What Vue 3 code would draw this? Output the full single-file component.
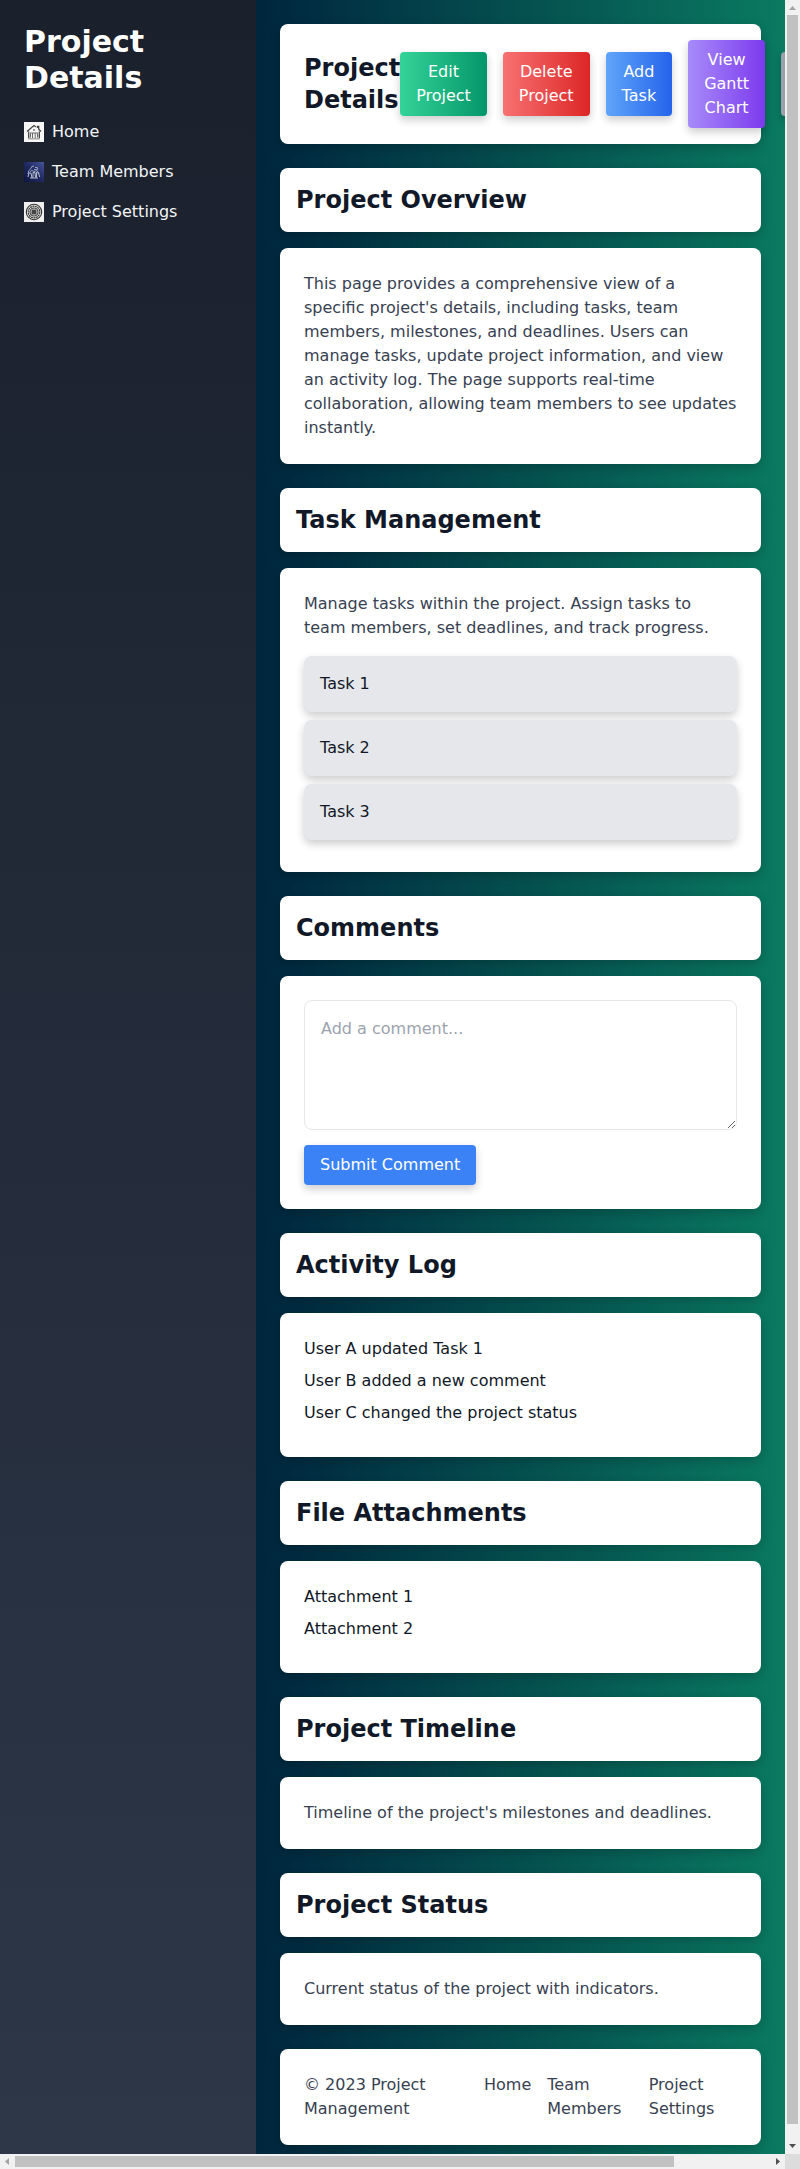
<script setup>
const actions = [
  { label: 'Edit Project', tone: 'green' },
  { label: 'Delete Project', tone: 'red' },
  { label: 'Add Task', tone: 'blue' },
  { label: 'View Gantt Chart', tone: 'purple' },
]
const tasks = ['Task 1', 'Task 2', 'Task 3']
const log = ['User A updated Task 1', 'User B added a new comment', 'User C changed the project status']
const files = ['Attachment 1', 'Attachment 2']
</script>

<template>
  <div class="window">
    <div class="page">
      <aside class="sidebar">
        <h1>Project Details</h1>
        <nav>
          <a>
            <svg class="icon" viewBox="0 0 20 20">
              <rect width="20" height="20" fill="#f7f7f7" />
              <path d="M3 9.500 10 3.500l1.800 1.500M13.500 6V4.300h1.200v2.900L17 9.500M4.700 9.500V16M15.300 9.500V16" fill="none" stroke="#444" stroke-width="1.300" />
              <path d="M4 16.800h12" stroke="#888" stroke-width="1" />
              <path d="M6.500 11.500v4M8.500 11v5M11.200 11v5M13.500 11.500v4M6 11h8" fill="none" stroke="#666" stroke-width="1" />
              <rect x="9" y="7" width="2" height="2" fill="#999" />
            </svg>
            Home
          </a>
          <a>
            <svg class="icon" viewBox="0 0 20 20">
              <defs>
                <linearGradient id="night" x1="0" y1="1" x2="1" y2="0">
                  <stop offset="0" stop-color="#0e1740" />
                  <stop offset=".5" stop-color="#1f2960" />
                  <stop offset="1" stop-color="#46549a" />
                </linearGradient>
              </defs>
              <rect width="20" height="20" fill="url(#night)" />
              <path d="M4 12q0-4 3-5.500 0-2.500 3-2.500M11 5.500q3-1 3 1.500-1.500 1-4 .5M6 9.500l2-1 2 1 3-1 2 3" fill="none" stroke="#9ba5c0" stroke-width="1" />
              <path d="M4 15l1-4 2 0 1 5M9 15.500v-5h2l.5 5M12.500 15.500v-5l2 .5 1.200 4M6 16h8" fill="none" stroke="#b8bfd2" stroke-width="1" />
            </svg>
            Team Members
          </a>
          <a>
            <svg class="icon" viewBox="0 0 20 20">
              <rect width="20" height="20" fill="#efefef" />
              <g fill="none" stroke="#333">
                <circle cx="10" cy="10" r="7.700" stroke-width="1.100" />
                <circle cx="10" cy="10" r="5.800" stroke-width="1.200" stroke-dasharray="2 .5" />
                <circle cx="10" cy="10" r="4" stroke-width="1.100" />
              </g>
              <rect x="7.500" y="7.500" width="5" height="5" fill="#444" />
            </svg>
            Project Settings
          </a>
        </nav>
      </aside>

      <main>
        <header class="card top">
          <h2>Project Details</h2>
          <div class="actions">
            <button v-for="a in actions" :key="a.label" :class="['btn', a.tone]">{{ a.label }}</button>
            <button class="btn gray"></button>
          </div>
        </header>

        <section>
          <h2 class="card title">Project Overview</h2>
          <div class="card body">
            <p>This page provides a comprehensive view of a specific project's details, including tasks, team members, milestones, and deadlines. Users can manage tasks, update project information, and view an activity log. The page supports real-time collaboration, allowing team members to see updates instantly.</p>
          </div>
        </section>

        <section>
          <h2 class="card title">Task Management</h2>
          <div class="card body">
            <p>Manage tasks within the project. Assign tasks to team members, set deadlines, and track progress.</p>
            <ul class="tasks">
              <li v-for="t in tasks" :key="t">{{ t }}</li>
            </ul>
          </div>
        </section>

        <section>
          <h2 class="card title">Comments</h2>
          <div class="card body">
            <textarea rows="4" placeholder="Add a comment..."></textarea>
            <button class="submit">Submit Comment</button>
          </div>
        </section>

        <section>
          <h2 class="card title">Activity Log</h2>
          <div class="card body">
            <ul class="list">
              <li v-for="l in log" :key="l">{{ l }}</li>
            </ul>
          </div>
        </section>

        <section>
          <h2 class="card title">File Attachments</h2>
          <div class="card body">
            <ul class="list">
              <li v-for="f in files" :key="f">{{ f }}</li>
            </ul>
          </div>
        </section>

        <section>
          <h2 class="card title">Project Timeline</h2>
          <div class="card body"><p>Timeline of the project's milestones and deadlines.</p></div>
        </section>

        <section>
          <h2 class="card title">Project Status</h2>
          <div class="card body"><p>Current status of the project with indicators.</p></div>
        </section>

        <footer class="card">
          <p>© 2023 Project Management</p>
          <nav>
            <a>Home</a>
            <a>Team Members</a>
            <a>Project Settings</a>
          </nav>
        </footer>
      </main>
    </div>

    <div class="bar vertical">
      <svg viewBox="0 0 15 15"><path d="M4 10 7.500 6 11 10z" fill="#a3a3a3" /></svg>
      <div class="thumb"></div>
      <svg viewBox="0 0 15 15"><path d="M4 5 7.500 9 11 5z" fill="#505050" /></svg>
    </div>
    <div class="bar horizontal">
      <svg viewBox="0 0 15 15"><path d="M9 4 5 7.500 9 11z" fill="#a3a3a3" /></svg>
      <div class="thumb"></div>
      <svg viewBox="0 0 15 15"><path d="M6 4 10 7.500 6 11z" fill="#505050" /></svg>
    </div>
    <div class="corner"></div>
  </div>
</template>

<style>
html, body { overflow: hidden; }
</style>

<style scoped>
.window {
  display: grid;
  grid-template: 2154px 15px / 785px 15px;
  width: 800px;
  font: 16px/24px "DejaVu Sans", sans-serif;
  color: #111827;
}
.window *, .window *::before { box-sizing: border-box; }
h1, h2, p, ul { margin: 0; padding: 0; }
ul { list-style: none; }
button { border: 0; font: inherit; color: #fff; }

.page { display: flex; overflow: hidden; }
.sidebar {
  flex: none;
  width: 256px;
  padding: 24px;
  color: #fff;
  background: linear-gradient(180deg, #1a202c, #2d3748);
}
.sidebar h1 { font-size: 30px; line-height: 36px; margin-bottom: 24px; }
.sidebar nav { display: grid; gap: 16px; }
.sidebar a { display: flex; align-items: center; color: #f3f4f6; }
.icon { width: 20px; height: 20px; margin-right: 8px; }

main {
  flex: none;
  width: 529px;
  padding: 24px;
  background: linear-gradient(90deg, #00253e, #0a7a61);
}
.card {
  background: #fff;
  border-radius: 8px;
  box-shadow: 0 4px 12px rgba(0, 0, 0, .2);
}
section, footer { margin-top: 24px; }
.top { display: flex; justify-content: space-between; align-items: center; height: 120px; padding: 16px 24px; }
h2 { font-size: 24px; line-height: 32px; }
.actions { display: flex; align-items: center; gap: 16px; }
.btn { padding: 8px 16px; border-radius: 4px; box-shadow: 0 4px 8px rgba(0, 0, 0, .2); }
.green { background: linear-gradient(90deg, #34d399, #059669); }
.red { background: linear-gradient(90deg, #f87171, #dc2626); }
.blue { background: linear-gradient(90deg, #60a5fa, #2563eb); }
.purple { background: linear-gradient(90deg, #a78bfa, #7c3aed); }
.gray { flex: none; width: 82px; height: 64px; background: linear-gradient(90deg, #9ca3af, #4b5563); }

.title { padding: 16px; margin-bottom: 16px; }
.body { padding: 24px; }
p { color: #374151; }
.tasks { margin-top: 16px; }
.tasks li {
  padding: 16px;
  margin-bottom: 8px;
  background: #e5e7eb;
  border-radius: 8px;
  box-shadow: 0 4px 8px rgba(0, 0, 0, .2);
}
.list li { margin-bottom: 8px; }
textarea {
  display: block;
  width: 100%;
  height: 130px;
  margin-bottom: 15px;
  padding: 16px;
  font: inherit;
  background: #fff;
  border: 1px solid #e5e7eb;
  border-radius: 8px;
}
textarea::placeholder { color: #9ca3af; }
.submit {
  display: block;
  padding: 8px 16px;
  background: #3b82f6;
  border-radius: 4px;
  box-shadow: 0 4px 8px rgba(0, 0, 0, .2);
}
footer { display: flex; justify-content: space-between; padding: 24px; color: #374151; }
footer nav { display: flex; gap: 16px; }

.bar { display: flex; background: #f1f1f1; }
.bar svg { flex: none; width: 15px; height: 15px; }
.thumb { background: #c1c1c1; }
.vertical { flex-direction: column; }
.vertical .thumb { height: 2109px; margin: 0 2px; }
.vertical svg:last-child { margin-top: auto; }
.horizontal .thumb { width: 659px; margin: 2px 0; }
.horizontal svg:last-child { margin-left: auto; }
.corner { background: #dcdcdc; }
</style>
